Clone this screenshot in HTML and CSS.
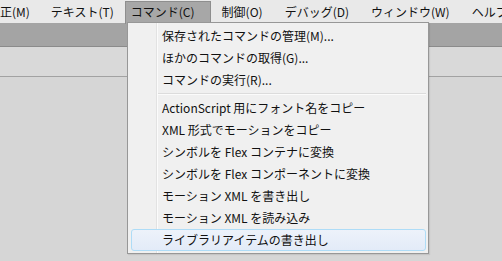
FILE: index.html
```html
<!DOCTYPE html>
<html lang="ja">

<head>
    <meta charset="UTF-8">
    <title>コマンド</title>
    <link rel="stylesheet" href="styles.css">
</head>

<body>
    <div class="app">
        <nav class="menubar">
            <span class="menu-title first">修正(M)</span>
            <span class="menu-title">テキスト(T)</span>
            <span class="menu-title open">コマンド(C)</span>
            <span class="menu-title">制御(O)</span>
            <span class="menu-title">デバッグ(D)</span>
            <span class="menu-title">ウィンドウ(W)</span>
            <span class="menu-title">ヘルプ(H)</span>
        </nav>
        <div class="toolbar"></div>
        <div class="panel-bar"></div>
        <div class="workspace"></div>

        <ul class="dropdown">
            <li class="menu-item">保存されたコマンドの管理(M)...</li>
            <li class="menu-item">ほかのコマンドの取得(G)...</li>
            <li class="menu-item">コマンドの実行(R)...</li>
            <li class="menu-sep"></li>
            <li class="menu-item">ActionScript 用にフォント名をコピー</li>
            <li class="menu-item">XML 形式でモーションをコピー</li>
            <li class="menu-item">シンボルを Flex コンテナに変換</li>
            <li class="menu-item">シンボルを Flex コンポーネントに変換</li>
            <li class="menu-item">モーション XML を書き出し</li>
            <li class="menu-item">モーション XML を読み込み</li>
            <li class="menu-item hover">ライブラリアイテムの書き出し</li>
        </ul>
    </div>
</body>

</html>
```

FILE: styles.css
```css
html, body {
    margin: 0;
    padding: 0;
}

body {
    font-family: "Noto Sans CJK JP", "Noto Sans", sans-serif;
    font-size: 12px;
    color: #111;
    background: #d6d6d6;
}

.app {
    position: relative;
    width: 502px;
    height: 261px;
    overflow: hidden;
}

/* barre de menus */
.menubar {
    display: flex;
    height: 23px;
    background: #e9e9e9;
    white-space: nowrap;
}

.menu-title {
    padding: 0 11px;
    height: 22px;
    margin-top: 1px;
    line-height: 21px;
    box-sizing: border-box;
}

.menu-title.first {
    margin-left: -23px;
    padding-right: 10px;
}

.menu-title.open {
    background: #a7a7a7;
    border: 1px solid #8e8e8e;
    border-bottom: none;
    padding: 0 15px 0 5px;
    line-height: 20px;
    height: 23px;
}

.toolbar {
    height: 23px;
    background: #a4a4a4;
    border-bottom: 1px solid #8b8b8b;
}

.panel-bar {
    height: 29px;
    background: #d9d9d9;
    border-bottom: 1px solid #a2a2a2;
}

.workspace {
    height: 184px;
    background: #d6d6d6;
}

/* menu déroulant */
.dropdown {
    position: absolute;
    left: 127px;
    top: 22px;
    width: 300px;
    margin: 0;
    padding: 2px 0;
    list-style: none;
    background-color: #f0f0f0;
    background-image: linear-gradient(to right, transparent 28px, #e2e2e2 28px, #e2e2e2 29px, #fbfbfb 29px, #fbfbfb 30px, transparent 30px);
    border: 1px solid #979797;
    box-shadow: 1px 1px 1px rgba(0, 0, 0, 0.08);
}

.menu-item {
    height: 22px;
    line-height: 21px;
    padding-left: 34px;
    white-space: nowrap;
}

.menu-item.hover {
    margin: 0 2px 0 3px;
    padding-left: 30px;
    border: 1px solid #aedcf7;
    border-radius: 3px;
    height: 22px;
    line-height: 19px;
    box-sizing: border-box;
    background: linear-gradient(#edf2fa, #e3ebf8);
}

.menu-sep {
    height: 6px;
    margin-left: 30px;
    margin-right: 2px;
    background: linear-gradient(transparent 2px, #dcdcdc 2px, #dcdcdc 3px, #fbfbfb 3px, #fbfbfb 4px, transparent 4px);
}
```
